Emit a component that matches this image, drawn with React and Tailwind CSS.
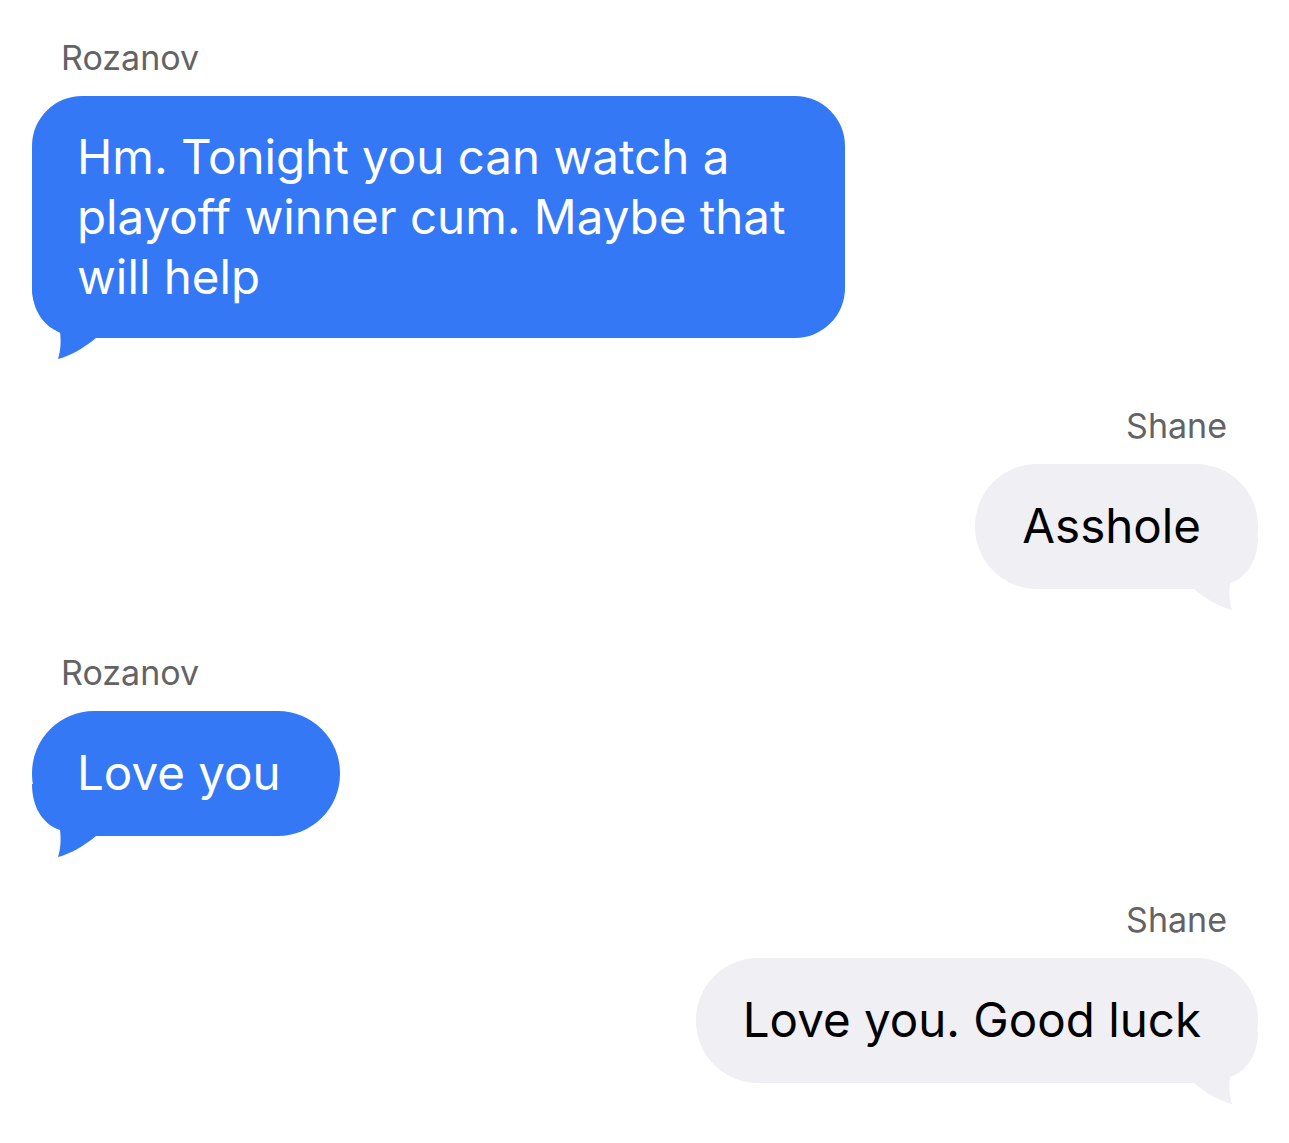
import React from 'react';

const messages = [
  { from: 'Rozanov', side: 'left', lines: ['Hm. Tonight you can watch a', 'playoff winner cum. Maybe that', 'will help'] },
  { from: 'Shane', side: 'right', lines: ['Asshole'] },
  { from: 'Rozanov', side: 'left', lines: ['Love you'] },
  { from: 'Shane', side: 'right', lines: ['Love you. Good luck'] },
];

function Tail({ side, color }) {
  return (
    <svg
      width="80"
      height="82"
      viewBox="0 0 80 82"
      className={
        side === 'left'
          ? 'absolute left-0 bottom-[-22px]'
          : 'absolute right-0 bottom-[-22px] scale-x-[-1]'
      }
    >
      <path
        d="M0 8 C0 30 10 48 28 54 C29 62 29 72 26 81 C38 78 52 70 64 60 L64 20 L20 8 Z"
        fill={color}
      />
    </svg>
  );
}

function Message({ msg }) {
  const left = msg.side === 'left';
  const multi = msg.lines.length > 1;
  return (
    <div className={`flex flex-col ${left ? 'items-start' : 'items-end'}`}>
      <div
        className={`h-[40px] leading-[40px] text-[34px] text-[#636366] ${left ? 'pl-[29px]' : 'pr-[31px]'}`}
      >
        {msg.from}
      </div>
      <div
        className={`relative mt-[18px] text-[47.5px] leading-[60px] ${
          left
            ? 'bg-[#3478f6] text-white pl-[45px] pr-[59px]'
            : 'bg-[#efeff4] text-black pl-[47px] pr-[57px]'
        } ${multi ? 'rounded-[50px] py-[31px]' : 'rounded-[62px] pt-[32px] pb-[33px]'}`}
      >
        <Tail side={msg.side} color={left ? '#3478f6' : '#efeff4'} />
        <div className="relative whitespace-nowrap">
          {msg.lines.map((l, i) => (
            <div key={i}>{l}</div>
          ))}
        </div>
      </div>
    </div>
  );
}

export default function App() {
  return (
    <div
      className="w-[1289px] h-[1143px] bg-white pl-[32px] pr-[31px] pt-[38px] overflow-hidden"
      style={{ fontFamily: 'Inter, "Liberation Sans", sans-serif' }}
    >
      <div className="flex flex-col">
        <Message msg={messages[0]} />
        <div className="mt-[68px]">
          <Message msg={messages[1]} />
        </div>
        <div className="mt-[64px]">
          <Message msg={messages[2]} />
        </div>
        <div className="mt-[64px]">
          <Message msg={messages[3]} />
        </div>
      </div>
    </div>
  );
}
